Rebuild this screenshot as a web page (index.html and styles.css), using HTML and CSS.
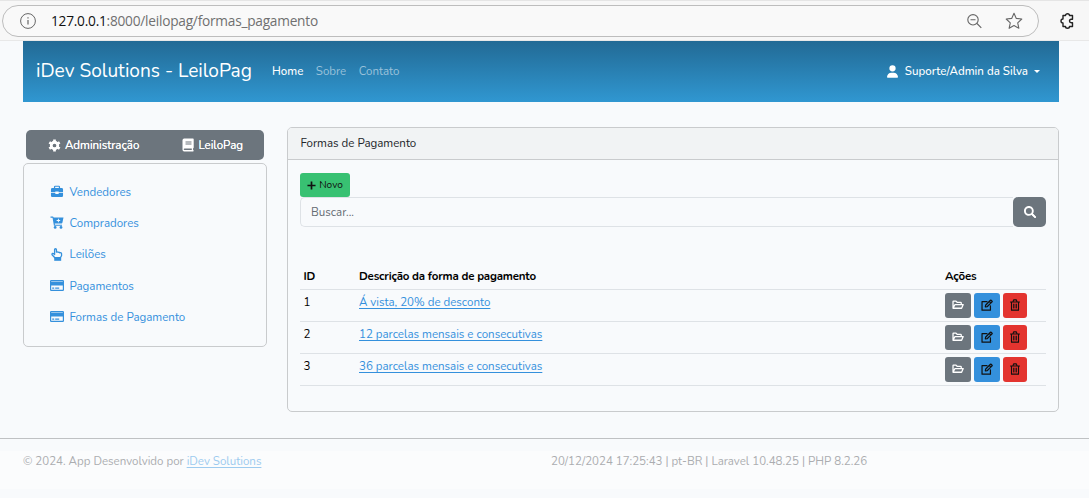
FILE: index.html
```html
<!DOCTYPE html>
<html lang="pt-BR">
<head>
<meta charset="utf-8">
<title>Formas de Pagamento</title>
<link rel="stylesheet" href="styles.css">
</head>
<body>
<svg class="sprite" aria-hidden="true">
  <symbol id="card" viewBox="0 0 14 12"><path fill="currentColor" fill-rule="evenodd" d="M1.200.5h11.600q1.200 0 1.200 1.200v8.600q0 1.200-1.200 1.200H1.200Q0 11.500 0 10.300V1.700Q0 .5 1.200.5ZM1.200 1.500v.6h11.600v-.6ZM1.200 6v4.300h11.600V6ZM2.200 8h2v1.300h-2ZM5.200 8h4v1.300h-4Z"/></symbol>
  <symbol id="folder" viewBox="0 0 14 12"><path fill="none" stroke="currentColor" stroke-width="1.500" stroke-linejoin="round" d="M1.200 9.500V2q0-.5.500-.5h3L6.200 3H10q.8 0 .8.800V5M1.200 9.800 3.500 5.500h9.600L11.200 9.800Z"/></symbol>
  <symbol id="edit" viewBox="0 0 14 14"><path fill="none" stroke="currentColor" stroke-width="1.400" stroke-linejoin="round" stroke-linecap="round" d="M7 3H1.200v10h9.800V8M5 9.300l.5-2.300 5.500-5.500q.4-.4.800 0l1.100 1.100q.4.400 0 .8L7.400 8.800ZM9.700 2.900l1.700 1.700"/></symbol>
  <symbol id="trash" viewBox="0 0 12 14"><path fill="none" stroke="currentColor" stroke-width="1.300" stroke-linecap="round" stroke-linejoin="round" d="M.8 3.500h10.400M1.900 3.500v9.500h8.200V3.500M3.600 3.300 4.400 1h3.200l.8 2.300"/><path stroke="currentColor" d="M4.200 5.500v5.500M6 5.500v5.500M7.800 5.500v5.500"/></symbol>
</svg>

<div class="browser">
  <div class="address">
    <svg class="info" viewBox="0 0 16 16"><circle cx="8" cy="8" r="7.400" fill="none" stroke="#666"/><path d="M8 7v4.500M8 4.300v1.300" stroke="#666" stroke-width="1.200"/></svg>
    <span class="url"><b>127.0.0.1</b>:8000/leilopag/formas_pagamento</span>
    <svg class="zoom" viewBox="0 0 15 15"><path d="M10 9.500 14.300 13.800M3.500 5.800h5" stroke="#666" stroke-width="1.100"/><circle cx="6" cy="5.800" r="5.200" fill="none" stroke="#666" stroke-width="1.100"/></svg>
    <svg class="star" viewBox="0 0 18 18"><path d="m9 1.300 2.300 5.100 5.500.6-4.100 3.800 1.200 5.500L9 13.500l-4.900 2.800 1.200-5.500L1.200 7l5.500-.6Z" fill="none" stroke="#666" stroke-width="1.100" stroke-linejoin="round"/></svg>
  </div>
  <svg class="puzzle" viewBox="0 0 16 16"><path d="M4 2.500h2.500a2 1.800 0 0 1 4 0H13.500v3.700h-1.200a1.800 1.800 0 0 0 0 3.600h1.200v3.700h-3a2 1.800 0 0 1-4 0H4V10a2 2 0 1 1 0-4Z" fill="none" stroke="#222" stroke-width="1.400" stroke-linejoin="round"/></svg>
</div>

<nav class="navbar">
  <span class="brand">iDev Solutions - LeiloPag</span>
  <a class="nav active">Home</a><a class="nav">Sobre</a><a class="nav">Contato</a>
  <a class="account"><svg viewBox="0 0 448 512"><path fill="#fff" d="M224 256A128 128 0 1 0 224 0a128 128 0 1 0 0 256zm-45.700 48C79.800 304 0 383.800 0 482.300C0 498.700 13.300 512 29.700 512H418.300c16.400 0 29.700-13.300 29.700-29.700C448 383.800 368.200 304 269.700 304H178.300z"/></svg><span>Suporte/Admin da Silva</span><i class="caret"></i></a>
</nav>

<main class="layout">
  <aside class="side">
    <div class="tabs">
      <a class="tab"><svg class="gear" viewBox="0 0 14 14"><circle cx="7" cy="7" r="3.500" fill="none" stroke="#fff" stroke-width="3"/><path d="M7 .5v3M7 10.500v3M1.400 3.700 4 5.300M10 8.700l2.600 1.600M1.400 10.300 4 8.700M10 5.300l2.600-1.600" stroke="#fff" stroke-width="2.900"/></svg><span>Administração</span></a>
      <a class="tab"><svg class="book" viewBox="0 0 12 14"><path fill="#fff" fill-rule="evenodd" d="M2.200.5H11q.7 0 .7.700v8.300q0 .6-.6.800v1.800q.6.100.6.700t-.7.700H2.200Q.5 13.500.5 11.700V2.300Q.5.500 2.200.5ZM3.500 3.500v.9h6v-.9ZM3.500 5.600v.9h6v-.9ZM2.500 10.500q-.8 0-.8.800t.8.800h7.300v-1.600Z"/></svg><span>LeiloPag</span></a>
    </div>
    <div class="menu">
      <a><svg viewBox="0 0 14 14"><path fill="currentColor" fill-rule="evenodd" d="M3.700 3.200V2.100Q3.700.7 5 .7h4q1.300 0 1.300 1.400v1.100h1.600q1.600 0 1.600 1.500v3H8.800V7H5.200v.7H.5v-3q0-1.500 1.600-1.500ZM5 3.200h4V2H5ZM.5 8.500h4.700v1.200h3.600V8.500h4.700v3.200q0 1.300-1.300 1.300H1.800Q.5 13 .5 11.700Z"/></svg><span>Vendedores</span></a>
      <a><svg viewBox="0 0 14 14"><path fill="currentColor" fill-rule="evenodd" d="M0 .5h2.300q.7 0 .9.700l.1.500H14l-1.200 5.600q-.2.800-1 .8H4.600l.2 1.200h7.600v1.200H3.700L2.200 1.900H0ZM8 2.900v1.400H6.600v1H8v1.400h1V5.300h1.400v-1H9V2.900Z"/><circle cx="5" cy="12.300" r="1.500" fill="currentColor"/><circle cx="11.300" cy="12.300" r="1.500" fill="currentColor"/></svg><span>Compradores</span></a>
      <a><svg viewBox="0 0 14 14"><path fill="none" stroke="currentColor" stroke-width="1.400" stroke-linejoin="round" d="M4.700 10.500 1.900 7.600q-.8-1.300.3-1.700.7-.2 2.200 1.100V1.900q0-1.100 1-1.100t1 1.100v2.500q1-.6 1.900.3 1-.5 1.700.4 1.700-.3 1.900.9v2.300L10.600 10.500Z"/><path fill="currentColor" d="M4 10.200h7.500v3.600H4Z"/></svg><span>Leilões</span></a>
      <a><svg viewBox="0 0 14 12"><use href="#card"/></svg><span>Pagamentos</span></a>
      <a><svg viewBox="0 0 14 12"><use href="#card"/></svg><span>Formas de Pagamento</span></a>
    </div>
  </aside>

  <section class="card">
    <header><span>Formas de Pagamento</span></header>
    <div class="content">
      <button class="new"><svg viewBox="0 0 10 10"><path d="M5 .5v9M.5 5h9" stroke="#111" stroke-width="1.900"/></svg><span>Novo</span></button>
      <div class="search"><div class="field">Buscar...</div><button><svg viewBox="0 0 512 512"><path fill="#fff" d="M416 208c0 45.900-14.900 88.300-40 122.700L502.600 457.400c12.500 12.500 12.500 32.800 0 45.300s-32.800 12.500-45.300 0L330.700 376c-34.400 25.200-76.800 40-122.700 40C93.100 416 0 322.900 0 208S93.100 0 208 0S416 93.100 416 208zM208 336a128 128 0 1 0 0-256 128 128 0 1 0 0 256z"/><path stroke="#fff" stroke-width="84" stroke-linecap="round" d="M350 350 465 465"/></svg></button></div>
      <div class="table">
        <div class="row head"><span>ID</span><span>Descrição da forma de pagamento</span><span>Ações</span></div>
        <div class="row"><span>1</span><span><a>Á vista, 20% de desconto</a></span><div class="actions"><button class="open"><svg viewBox="0 0 14 12"><use href="#folder"/></svg></button><button class="edit"><svg viewBox="0 0 14 14"><use href="#edit"/></svg></button><button class="delete"><svg viewBox="0 0 12 14"><use href="#trash"/></svg></button></div></div>
        <div class="row"><span>2</span><span><a>12 parcelas mensais e consecutivas</a></span><div class="actions"><button class="open"><svg viewBox="0 0 14 12"><use href="#folder"/></svg></button><button class="edit"><svg viewBox="0 0 14 14"><use href="#edit"/></svg></button><button class="delete"><svg viewBox="0 0 12 14"><use href="#trash"/></svg></button></div></div>
        <div class="row"><span>3</span><span><a>36 parcelas mensais e consecutivas</a></span><div class="actions"><button class="open"><svg viewBox="0 0 14 12"><use href="#folder"/></svg></button><button class="edit"><svg viewBox="0 0 14 14"><use href="#edit"/></svg></button><button class="delete"><svg viewBox="0 0 12 14"><use href="#trash"/></svg></button></div></div>
      </div>
    </div>
  </section>
</main>

<footer class="footer"><div class="band"><div><span class="copy">© 2024. App Desenvolvido por </span><a>iDev Solutions</a></div><div class="version">20/12/2024 17:25:43 | pt-BR | Laravel 10.48.25 | PHP 8.2.26</div></div></footer>
</body>
</html>
```
FILE: styles.css
```css
* { box-sizing: border-box; }
body { margin: 0; width: 1089px; height: 498px; overflow: hidden; background: #f8fafc; color: #212529; font: 11.52px/18px Nunito, Lato, sans-serif; }
svg { display: block; flex: none; }
button { border: 0; padding: 0; font: inherit; display: flex; align-items: center; justify-content: center; }
.sprite { position: absolute; width: 0; height: 0; }

.browser { height: 41px; background: #f7f7f7; border-top: 1px solid #e5e5e5; border-bottom: 1px solid #e8e8e8; display: flex; align-items: center; }
.address { width: 1037px; height: 32px; margin: 1px 0 0 2px; border: 1px solid #bdbdbd; border-radius: 16px; background: #f9f9f9; display: flex; align-items: center; padding: 0 15px 0 17px; }
.info { width: 16px; height: 16px; }
.url { margin-left: 15px; font: 13.7px/20px "Open Sans", sans-serif; letter-spacing: -.24px; color: #707070; white-space: nowrap; }
.url b { font-weight: 400; color: #111; }
.zoom { width: 15px; height: 15px; margin-left: auto; }
.star { width: 18px; height: 18px; margin-left: 23px; }
.puzzle { width: 16px; height: 16px; margin-left: 20px; }

.navbar { width: 1036px; height: 61px; margin-left: 23px; padding: 0 19px 1px 13px; background: linear-gradient(#226a95, #3097d1); display: flex; align-items: center; color: #fff; }
.brand { width: 236px; font-size: 19.1px; line-height: 28px; white-space: nowrap; }
.nav { margin-right: 12.5px; color: #9ac1da; }
.nav.active { color: #fff; font-weight: 500; }
.account { margin-left: auto; display: flex; align-items: center; font-weight: 500; }
.account svg { width: 11px; height: 13px; margin-right: 7px; }
.caret { margin-left: 6px; border: 3px solid transparent; border-top-color: #fff; border-bottom: 0; }

.layout { padding: 25px 30px 0 23px; height: 336px; display: flex; gap: 20px; align-items: flex-start; }
.side { width: 244px; padding-top: 3px; }
.tabs { width: 238px; height: 30px; margin: 0 3px 3px; border-radius: 5px; background: #6c757d; color: #fff; display: flex; justify-content: space-between; padding: 0 21px 0 22px; }
.tab { display: flex; align-items: center; gap: 4px; text-shadow: 0 0 .5px #fff; }
.gear { width: 13px; height: 13px; }
.book { width: 12px; height: 14px; }
.menu { height: 184px; border: 1px solid #c9cbcd; border-radius: 5px; padding: 12px 26px; color: #3490dc; }
.menu a { height: 31.300px; display: flex; align-items: center; gap: 5.500px; }
.menu svg { width: 14px; height: 13px; }

.card { width: 772px; height: 285px; border: 1px solid #c9cbcd; border-radius: 5px; overflow: hidden; }
.card header { height: 32px; padding: 7px 12.500px; line-height: 17px; background: #f1f3f4; border-bottom: 1px solid #c9cbcd; }
.content { padding: 13px 12px; }
.new { width: 50px; height: 24px; border-radius: 3px; background: #38c172; color: #111; gap: 3px; font-size: 10.080px; }
.new svg { width: 9px; height: 9px; }
.search { display: flex; height: 30px; margin-bottom: 36px; }
.field { flex: 1; border: 1px solid #dee2e6; border-right: 0; border-radius: 5px 0 0 5px; padding: 5px 10px; color: #646b72; }
.search button { width: 33px; border-radius: 5px; background: #6c757d; }
.search button svg { width: 12px; height: 12px; }
.row { display: grid; grid-template-columns: 55.500px 586px 1fr; height: 32px; border-bottom: 1px solid #dee2e6; padding: 3px 0 0 3.500px; color: #000; }
.row.head { height: 27px; padding-top: 4px; font-weight: 700; letter-spacing: -.19px; }
.row a { color: #3490dc; text-decoration: underline; text-underline-offset: 1.500px; }
.actions { display: flex; gap: 3px; }
.actions button { width: 26px; height: 25px; border-radius: 3px; color: #111; padding-bottom: 2px; }
.actions .open { background: #6c757d; color: #fff; }
.actions .edit { background: #3490dc; }
.actions .delete { width: 24px; background: #e3342f; }
.actions svg { width: 12px; height: 12px; }

.footer { height: 60px; border-top: 1px solid #bfc1c3; padding-top: 12px; color: #abadb0; }
.band { height: 38px; background: #fbfcfd; padding: 1px 23px; display: grid; grid-template-columns: 528px 1fr; }
.copy { white-space: pre; }
.band a { color: #9dcbef; text-decoration: underline; text-underline-offset: 1.500px; }
```
